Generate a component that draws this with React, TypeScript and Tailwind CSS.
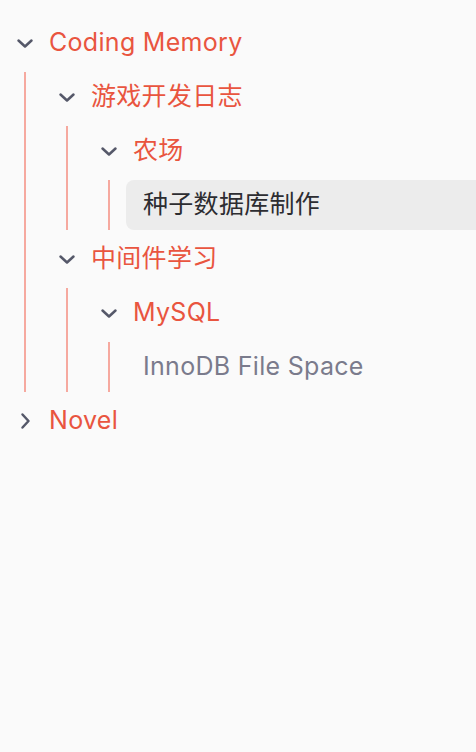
import { useState } from "react";

type Nodo = {
  id: string;
  titulo: string;
  filhos?: Nodo[];
  aberto?: boolean;
};

const arvore: Nodo[] = [
  {
    id: "coding",
    titulo: "Coding Memory",
    aberto: true,
    filhos: [
      {
        id: "jogo",
        titulo: "游戏开发日志",
        aberto: true,
        filhos: [
          {
            id: "fazenda",
            titulo: "农场",
            aberto: true,
            filhos: [{ id: "sementes", titulo: "种子数据库制作" }],
          },
        ],
      },
      {
        id: "middleware",
        titulo: "中间件学习",
        aberto: true,
        filhos: [
          {
            id: "mysql",
            titulo: "MySQL",
            aberto: true,
            filhos: [{ id: "innodb", titulo: "InnoDB File Space" }],
          },
        ],
      },
    ],
  },
  { id: "novel", titulo: "Novel", aberto: false, filhos: [] },
];

function Chevron({ aberto }: { aberto: boolean }) {
  return (
    <svg
      width="18"
      height="18"
      viewBox="0 0 18 18"
      fill="none"
      stroke="#555869"
      strokeWidth="2.5"
      strokeLinecap="round"
      strokeLinejoin="round"
      className={`shrink-0 transition-transform ${aberto ? "" : "-rotate-90"}`}
    >
      <path d="M2.5 6.5 L9 12.5 L15.5 6.5" />
    </svg>
  );
}

function ItemArvore({
  nodo,
  selecionado,
  aoSelecionar,
}: {
  nodo: Nodo;
  selecionado: string;
  aoSelecionar: (id: string) => void;
}) {
  const [aberto, setAberto] = useState(!!nodo.aberto);
  const ehPasta = nodo.filhos !== undefined;

  if (!ehPasta) {
    const ativo = selecionado === nodo.id;
    return (
      <button
        type="button"
        onClick={() => aoSelecionar(nodo.id)}
        className={`flex h-[50px] w-[calc(100%+16px)] items-center rounded-lg pl-[17px] text-left text-[25px] tracking-[0.3px] ${
          ativo ? "bg-[#ececec] text-[#2d2d31]" : "text-[#7a7b8c]"
        }`}
      >
        {nodo.titulo}
      </button>
    );
  }

  return (
    <div className="flex flex-col gap-1">
      <button
        type="button"
        onClick={() => setAberto(!aberto)}
        className="flex h-[50px] items-center gap-[15px] pl-4 text-left text-[25px] tracking-[0.3px] text-[#e9553f]"
      >
        <Chevron aberto={aberto} />
        <span>{nodo.titulo}</span>
      </button>
      {aberto && nodo.filhos && nodo.filhos.length > 0 && (
        <div className="ml-6 flex flex-col gap-1 border-l-2 border-[#f6a99f] pl-4">
          {nodo.filhos.map((filho) => (
            <ItemArvore
              key={filho.id}
              nodo={filho}
              selecionado={selecionado}
              aoSelecionar={aoSelecionar}
            />
          ))}
        </div>
      )}
    </div>
  );
}

export default function App() {
  const [selecionado, setSelecionado] = useState("sementes");

  return (
    <main
      className="h-[752px] w-[476px] overflow-hidden bg-[#fafafa] pt-[18px]"
      style={{ fontFamily: 'Inter, "Noto Sans CJK SC", sans-serif' }}
    >
      <nav className="flex flex-col gap-1">
        {arvore.map((nodo) => (
          <ItemArvore
            key={nodo.id}
            nodo={nodo}
            selecionado={selecionado}
            aoSelecionar={setSelecionado}
          />
        ))}
      </nav>
    </main>
  );
}
